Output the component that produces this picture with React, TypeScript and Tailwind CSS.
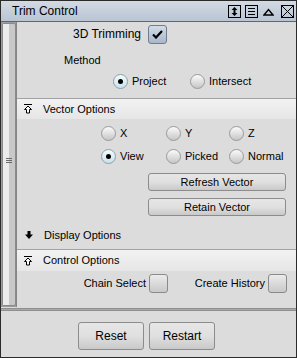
import React from "react";

const font = { fontFamily: '"Liberation Sans", Arial, sans-serif' };

function TitleIcons() {
  return (
    <div className="flex items-center gap-[4px] pr-[2px]">
      <svg width="13" height="13" viewBox="0 0 13 13">
        <rect x="0.5" y="0.5" width="12" height="12" fill="none" stroke="#000" />
        <path d="M6.5 4 V9" stroke="#000" strokeWidth="2" />
        <path d="M3.5 5 L6.5 2 L9.5 5 Z M3.5 8 L6.5 11 L9.5 8 Z" fill="#000" />
      </svg>
      <svg width="13" height="13" viewBox="0 0 13 13">
        <rect x="0.5" y="0.5" width="12" height="12" fill="none" stroke="#000" />
        <path d="M3 3.5 H10 M3 6.5 H10 M3 9.5 H10" stroke="#000" />
      </svg>
      <svg width="11" height="13" viewBox="0 0 11 13" className="mx-[1px]">
        <path d="M1 10 L5.5 4.5 L10 10 Z" fill="none" stroke="#000" strokeWidth="1.4" />
      </svg>
      <svg width="13" height="13" viewBox="0 0 13 13" className="ml-[2px]">
        <rect x="0.5" y="0.5" width="12" height="12" fill="none" stroke="#000" />
        <path d="M1 1 L12 12 M12 1 L1 12" stroke="#000" />
      </svg>
    </div>
  );
}

function CollapseIcon() {
  return (
    <svg width="10" height="10" viewBox="0 0 10 10">
      <path d="M1 0.5 H9" stroke="#000" />
      <path d="M5 2 L8.5 5.5 L6.5 5.5 L6.5 9 L3.5 9 L3.5 5.5 L1.5 5.5 Z" fill="#fff" stroke="#000" />
    </svg>
  );
}

function ExpandIcon() {
  return (
    <svg width="10" height="10" viewBox="0 0 10 10">
      <path d="M3.5 1 L6.5 1 L6.5 4.5 L9 4.5 L5 9 L1 4.5 L3.5 4.5 Z" fill="#000" />
    </svg>
  );
}

function CheckBox({ checked }: { checked?: boolean }) {
  return (
    <div
      className={`flex h-[19px] w-[19px] items-center justify-center rounded-[3px] border ${
        checked
          ? "border-[#6f7d8f] bg-gradient-to-b from-[#d3dce7] to-[#a9b7c9]"
          : "border-[#8a8a8a] bg-gradient-to-b from-[#ebebeb] to-[#c9c9c9]"
      }`}
    >
      {checked ? (
        <svg width="11" height="9" viewBox="0 0 11 9">
          <path d="M1 4.5 L4 7.5 L10 1" fill="none" stroke="#000" strokeWidth="2.2" />
        </svg>
      ) : null}
    </div>
  );
}

function Radio({ label, selected }: { label: string; selected?: boolean }) {
  return (
    <div className="flex h-[15px] items-center gap-[4px]">
      <div
        className={`flex h-[15px] w-[15px] items-center justify-center rounded-full border ${
          selected
            ? "border-[#8aa0aa] bg-gradient-to-b from-[#f4fbfd] to-[#c9e2ea]"
            : "border-[#9a9a9a] bg-gradient-to-b from-[#fbfbfb] to-[#c6c6c6]"
        }`}
      >
        {selected ? <div className="h-[5px] w-[5px] rounded-full bg-black" /> : null}
      </div>
      <span>{label}</span>
    </div>
  );
}

function Button({ label, className }: { label: string; className: string }) {
  return (
    <div
      className={`flex items-center justify-center rounded-[3px] border border-[#8c8c8c] bg-gradient-to-b from-[#e6e6e6] via-[#e0e0e0] to-[#c9c9c9] ${className}`}
    >
      {label}
    </div>
  );
}

export default function App() {
  return (
    <div
      style={font}
      className="box-border flex h-[358px] w-[297px] flex-col border border-[#2b2b2b] bg-[#dcdcdc] text-[11px] leading-[15px] text-black"
    >
      <div className="flex h-[21px] items-center justify-between border-b border-[#5f6670] bg-gradient-to-b from-[#d2dae4] to-[#b9c5d3] pl-[11px]">
        <span className="text-[12px]">Trim Control</span>
        <TitleIcons />
      </div>

      <div className="flex h-[285px]">
        <div className="w-[16px] border-r border-[#858585] bg-[#9c9c9c] py-[1px] pl-[1px] pr-0">
          <div className="relative flex h-full w-[14px] rounded-[2px] border border-[#8a8a8a] bg-[#c8c8c8]">
            <div className="w-[6px] bg-[#ececec]" />
            <div className="flex-1" />
            <div className="absolute left-[3px] top-[134px] flex flex-col gap-[1px]">
              <div className="h-[1px] w-[6px] bg-[#6a6a6a]" />
              <div className="h-[1px] w-[6px] bg-[#6a6a6a]" />
              <div className="h-[1px] w-[6px] bg-[#6a6a6a]" />
            </div>
          </div>
        </div>

        <div className="flex flex-1 flex-col">
          <div className="mt-[3px] flex h-[19px] items-center">
            <span className="w-[124px] text-right text-[12px]">3D Trimming</span>
            <div className="ml-[7px]">
              <CheckBox checked />
            </div>
          </div>

          <div className="mt-[9px] flex h-[14px] items-center pl-[47px]">Method</div>

          <div className="mt-[7px] flex h-[15px] items-center pl-[96px]">
            <div className="w-[77px]">
              <Radio label="Project" selected />
            </div>
            <Radio label="Intersect" />
          </div>

          <div className="mt-[9px] border-t border-[#a3a3a3] bg-gradient-to-b from-[#f2f2f2] to-[#e6e6e6]">
            <div className="flex h-[20px] items-center gap-[10px] pl-[6px]">
              <CollapseIcon />
              <span>Vector Options</span>
            </div>
          </div>

          <div className="mt-[7px] grid h-[15px] grid-cols-[65px_63px_1fr] pl-[84px]">
            <Radio label="X" />
            <Radio label="Y" />
            <Radio label="Z" />
          </div>
          <div className="mt-[8px] grid h-[15px] grid-cols-[65px_63px_1fr] pl-[84px]">
            <Radio label="View" selected />
            <Radio label="Picked" />
            <Radio label="Normal" />
          </div>

          <Button label="Refresh Vector" className="ml-[131px] mt-[9px] h-[18px] w-[138px]" />
          <Button label="Retain Vector" className="ml-[131px] mt-[7px] h-[18px] w-[138px]" />

          <div className="mt-[9px] flex h-[20px] items-center gap-[10px] pl-[7px]">
            <ExpandIcon />
            <span>Display Options</span>
          </div>

          <div className="mt-[4px] border-t border-[#a3a3a3] bg-gradient-to-b from-[#f2f2f2] to-[#e6e6e6]">
            <div className="flex h-[21px] items-center gap-[10px] pl-[6px]">
              <CollapseIcon />
              <span>Control Options</span>
            </div>
          </div>

          <div className="mt-[3px] flex h-[19px] items-center">
            <span className="w-[129px] text-right">Chain Select</span>
            <div className="ml-[3px]">
              <CheckBox />
            </div>
            <span className="w-[97px] text-right">Create History</span>
            <div className="ml-[3px]">
              <CheckBox />
            </div>
          </div>
        </div>
      </div>

      <div className="mt-[1px] h-[3px] border-y border-[#8f8f8f] bg-[#a8a8a8]" />

      <div className="mt-[11px] flex gap-[5px] pl-[77px]">
        <Button label="Reset" className="h-[28px] w-[66px] text-[12px]" />
        <Button label="Restart" className="h-[28px] w-[66px] text-[12px]" />
      </div>
    </div>
  );
}
